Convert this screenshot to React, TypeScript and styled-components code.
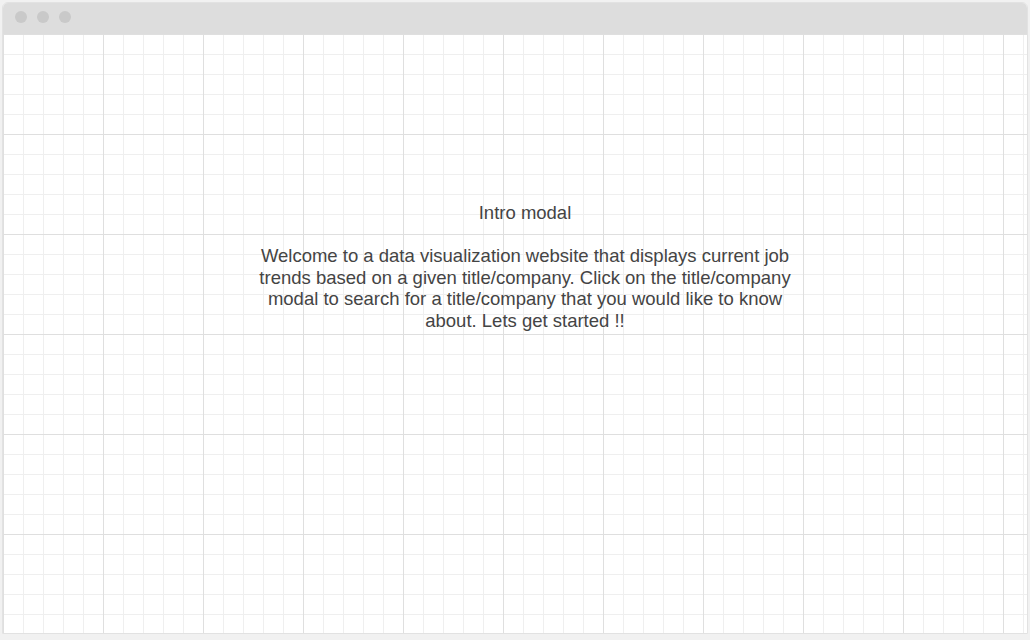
import React from "react";
import styled, { createGlobalStyle } from "styled-components";

const Global = createGlobalStyle`
  html, body {
    margin: 0;
    padding: 0;
    background: #f1f1f1;
    font-family: "Liberation Sans", Arial, sans-serif;
  }
`;

const Page = styled.div`
  width: 1030px;
  height: 640px;
  padding: 2px 0 0 2px;
  box-sizing: border-box;
`;

const Window = styled.div`
  width: 1026px;
  height: 632px;
  box-sizing: border-box;
  border: 1px solid #e2e2e2;
  border-radius: 6px 6px 0 0;
  background: #ffffff;
  display: flex;
  flex-direction: column;
  overflow: hidden;
`;

const TitleBar = styled.div`
  height: 31px;
  flex: none;
  background: #dddddd;
  display: flex;
  align-items: center;
  gap: 10px;
  padding: 0 0 3px 12px;
  box-sizing: border-box;
`;

const Dot = styled.span`
  width: 12px;
  height: 12px;
  border-radius: 50%;
  background: #c9c9c9;
`;

const Canvas = styled.div`
  flex: 1;
  background-color: #ffffff;
  background-image:
    linear-gradient(to right, #dfdfdf 1px, transparent 1px),
    linear-gradient(to bottom, #dfdfdf 1px, transparent 1px),
    linear-gradient(to right, #efefef 1px, transparent 1px),
    linear-gradient(to bottom, #efefef 1px, transparent 1px);
  background-size: 100px 100px, 100px 100px, 20px 20px, 20px 20px;
  background-position: 0 0;
  display: flex;
  justify-content: center;
  padding: 168px 0 0 20px;
  box-sizing: border-box;
`;

const Modal = styled.div`
  width: 545px;
  text-align: center;
  color: #444444;
  font-size: 18.5px;
  line-height: 21.5px;
`;

const Title = styled.div`
  margin-bottom: 21.5px;
`;

const Body = styled.div``;

export default function App() {
  return (
    <>
      <Global />
      <Page>
        <Window>
          <TitleBar>
            <Dot />
            <Dot />
            <Dot />
          </TitleBar>
          <Canvas>
            <Modal>
              <Title>Intro modal</Title>
              <Body>
                Welcome to a data visualization website that displays current job
                trends based on a given title/company. Click on the title/company
                modal to search for a title/company that you would like to know
                about. Lets get started !!
              </Body>
            </Modal>
          </Canvas>
        </Window>
      </Page>
    </>
  );
}
